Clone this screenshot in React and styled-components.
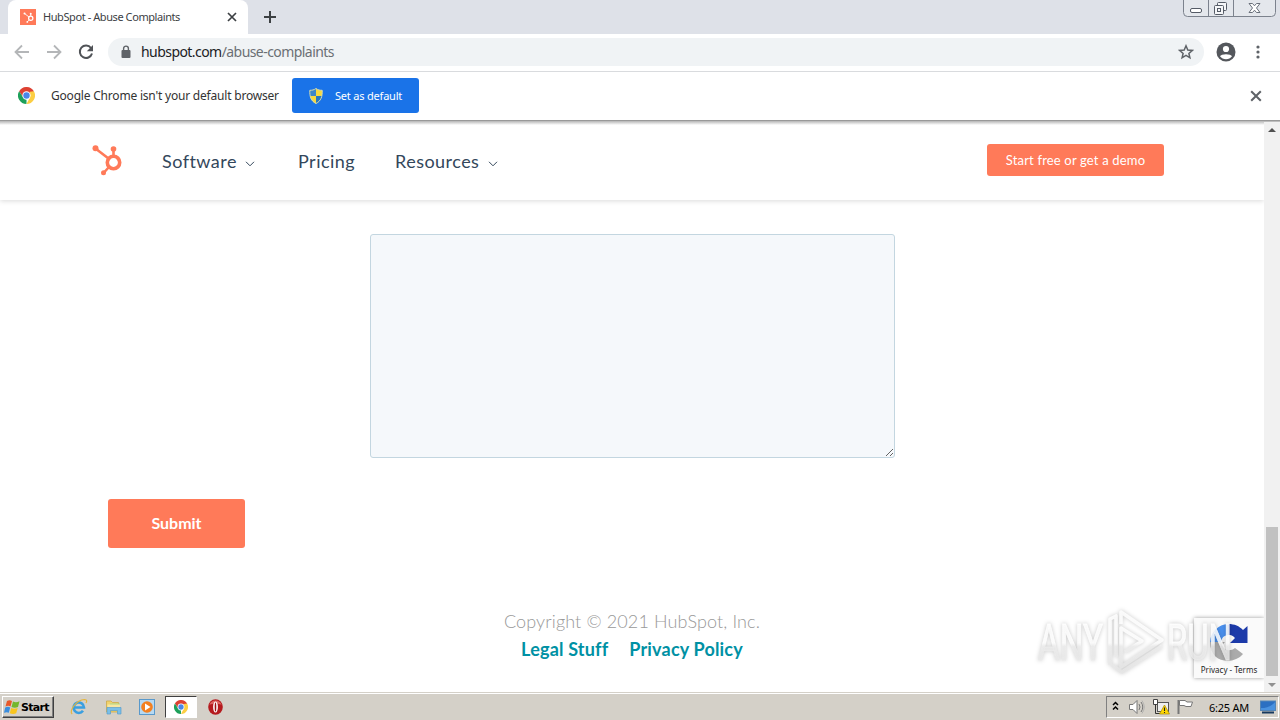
import React from 'react';
import styled, { createGlobalStyle, css } from 'styled-components';

const App = () => {
   return (
      <>
         <GlobalStyle />
         <Screen>
            <TabStrip>
               <Tab>
                  <Favicon>
                     <Sprocket size={11} color="#fff" />
                  </Favicon>
                  <TabTitle>HubSpot - Abuse Complaints</TabTitle>
                  <Cross size={10} color="#3c4043" />
               </Tab>
               <NewTab>
                  <svg width="12" height="12" viewBox="0 0 12 12">
                     <path d="M6 0V12M0 6H12" stroke="#3c4043" strokeWidth="2" />
                  </svg>
               </NewTab>
               <WindowButtons />
            </TabStrip>

            <Toolbar>
               <Arrow />
               <Arrow forward />
               <Reload />
               <AddressBar>
                  <Lock />
                  <Url>
                     hubspot.com<span>/abuse-complaints</span>
                  </Url>
                  <Star />
               </AddressBar>
               <Profile />
               <Dots />
            </Toolbar>

            <InfoBar>
               <ChromeLogo size={17} />
               <InfoText>Google Chrome isn't your default browser</InfoText>
               <DefaultButton>
                  <Shield />
                  <span>Set as default</span>
               </DefaultButton>
               <InfoClose>
                  <Cross size={12} color="#5f6368" />
               </InfoClose>
            </InfoBar>

            <Viewport>
               <Page>
                  <Nav>
                     <Sprocket size={32} color="#ff7a59" />
                     <NavItem $left={39} $width={74}>
                        Software
                     </NavItem>
                     <Chevron />
                     <NavItem $left={43} $width={57}>
                        Pricing
                     </NavItem>
                     <NavItem $left={40} $width={84}>
                        Resources
                     </NavItem>
                     <Chevron />
                     <DemoButton>Start free or get a demo</DemoButton>
                  </Nav>

                  <Form>
                     <Message />
                     <Submit>Submit</Submit>
                  </Form>

                  <Footer>
                     <Copyright>Copyright © 2021 HubSpot, Inc.</Copyright>
                     <Links>
                        <FooterLink>Legal Stuff</FooterLink>
                        <FooterLink>Privacy Policy</FooterLink>
                     </Links>
                  </Footer>

                  <Captcha>
                     <CaptchaLogo />
                     <span>Privacy - Terms</span>
                  </Captcha>
                  <Watermark />
               </Page>

               <Scrollbar>
                  <ScrollArrow>
                     <svg width="8" height="4" viewBox="0 0 8 4">
                        <path d="M0 4L4 0L8 4Z" fill="#505050" />
                     </svg>
                  </ScrollArrow>
                  <Thumb />
                  <ScrollArrow>
                     <svg width="8" height="4" viewBox="0 0 8 4">
                        <path d="M0 0L4 4L8 0Z" fill="#909090" />
                     </svg>
                  </ScrollArrow>
               </Scrollbar>
            </Viewport>

            <Taskbar>
               <StartButton>
                  <WindowsFlag />
                  <span>Start</span>
               </StartButton>
               <QuickLaunch>
                  <Task>
                     <ExplorerIcon />
                  </Task>
                  <Task>
                     <FolderIcon />
                  </Task>
                  <Task>
                     <PlayerIcon />
                  </Task>
                  <Task $active>
                     <ChromeLogo size={14} />
                  </Task>
                  <Task>
                     <OperaIcon />
                  </Task>
               </QuickLaunch>
               <Tray>
                  <TrayIcons />
                  <Clock>6:25 AM</Clock>
                  <DesktopIcon />
               </Tray>
            </Taskbar>
         </Screen>
      </>
   );
};

export default App;

/* ---------- icons ---------- */

const Sprocket = ({ size, color }) => (
   <svg width={size} height={size} viewBox="0 0 32 32" fill="none" stroke={color}>
      <circle cx="22.5" cy="18.5" r="6.2" strokeWidth="3.6" />
      <path d="M4.5 4.5L17.5 14.5M22.5 5V12M18 23L13 28.5" strokeWidth="2.6" />
      <g fill={color} stroke="none">
         <circle cx="4.5" cy="4.3" r="3" />
         <circle cx="22.5" cy="5" r="2.8" />
         <circle cx="12.5" cy="28.8" r="2.5" />
      </g>
   </svg>
);

const Cross = ({ size, color }) => (
   <svg width={size} height={size} viewBox="0 0 10 10">
      <path d="M1 1L9 9M9 1L1 9" stroke={color} strokeWidth="1.7" />
   </svg>
);

const Arrow = ({ forward }) => (
   <ArrowSvg $forward={forward} width="16" height="16" viewBox="0 0 16 16">
      <path d="M15 8H2M8 1.5L1.5 8L8 14.5" fill="none" stroke="#b4b6b8" strokeWidth="1.8" />
   </ArrowSvg>
);

const Reload = () => (
   <svg width="16" height="16" viewBox="0 0 16 16">
      <path d="M13 4A6.2 6.2 0 1 0 14 9.5" fill="none" stroke="#505357" strokeWidth="2" />
      <path d="M15 1V7.2H8.8Z" fill="#505357" />
   </svg>
);

const Lock = () => (
   <svg width="10" height="14" viewBox="0 0 10 14">
      <rect x="0.5" y="5" width="9" height="8" rx="1" fill="#5f6368" />
      <path d="M2.6 6V3.5a2.4 2.4 0 0 1 4.8 0V6" fill="none" stroke="#5f6368" strokeWidth="1.4" />
   </svg>
);

const Star = () => (
   <svg width="16" height="16" viewBox="0 0 16 16">
      <path
         d="M8 1.8L9.8 6L14.3 6.4L10.9 9.4L11.9 13.8L8 11.4L4.1 13.8L5.1 9.4L1.7 6.4L6.2 6Z"
         fill="none"
         stroke="#5f6368"
         strokeWidth="1.5"
      />
   </svg>
);

const Profile = () => (
   <svg width="20" height="20" viewBox="0 0 20 20">
      <circle cx="10" cy="10" r="9.5" fill="#54575c" />
      <circle cx="10" cy="7" r="3.1" fill="#fff" />
      <path d="M4 14.2C5 11.5 15 11.5 16 14.2C14.5 16.3 12.5 17.2 10 17.2C7.5 17.2 5.5 16.3 4 14.2Z" fill="#fff" />
   </svg>
);

const Dots = () => (
   <DotsSvg width="4" height="14" viewBox="0 0 4 14" fill="#5f6368">
      <circle cx="2" cy="2" r="1.6" />
      <circle cx="2" cy="7" r="1.6" />
      <circle cx="2" cy="12" r="1.6" />
   </DotsSvg>
);

const WindowButtons = () => (
   <WindowSvg width="93" height="17" viewBox="0 0 93 17">
      <path
         d="M0.5 0V12.5Q0.5 16.5 4.5 16.5H88.5Q92.5 16.5 92.5 12.5V0M25.5 0V16M50.5 0V16"
         fill="#e4e7ec"
         stroke="#7c828d"
      />
      <rect x="7.5" y="8.5" width="11" height="4" rx="1.5" fill="#fff" stroke="#555b66" />
      <g fill="#f5f6f8" stroke="#555b66">
         <rect x="34.5" y="2.5" width="9" height="8" rx="1" />
         <rect x="31.5" y="5.5" width="9" height="9" rx="1" />
         <rect x="34.5" y="8.5" width="3" height="3" />
      </g>
      <path
         d="M66 3.5H69.5L71.5 5.8L73.5 3.5H77L73.5 8L77 12.5H73.5L71.5 10.2L69.5 12.5H66L69.5 8Z"
         fill="#fff"
         stroke="#6a707b"
      />
   </WindowSvg>
);

const ChromeLogo = ({ size }) => (
   <svg width={size} height={size} viewBox="0 0 18 18">
      <path d="M9 9L1.2 4.5A9 9 0 0 1 16.8 4.5Z" fill="#dd4132" />
      <path d="M1.2 4.5H16.8V5H9L5.5 11Z" fill="#dd4132" />
      <path d="M1.2 4.5L5.5 11.1L9 13L9 18A9 9 0 0 1 1.2 4.5Z" fill="#1da05a" />
      <path d="M16.8 4.5A9 9 0 0 1 9 18L12.6 11V5Z" fill="#fcce43" />
      <circle cx="9" cy="9" r="4.4" fill="#fff" />
      <circle cx="9" cy="9" r="3.4" fill="#4a86e8" />
   </svg>
);

const Shield = () => (
   <svg width="14" height="16" viewBox="0 0 14 16">
      <path d="M7 0.5C5 2 3 2.3 0.8 2.3C0.5 8.5 2 13 7 15.5Z" fill="#3d87c9" />
      <path d="M7 0.5C9 2 11 2.3 13.2 2.3C13.5 8.5 12 13 7 15.5Z" fill="#f6d93f" />
      <path d="M7 8H1C1.8 11.5 3.4 14 7 15.5Z" fill="#f6d93f" />
      <path d="M7 8H13C12.2 11.5 10.6 14 7 15.5Z" fill="#2877be" />
      <path
         d="M7 0.5C5 2 3 2.3 0.8 2.3C0.5 8.5 2 13 7 15.5C12 13 13.5 8.5 13.2 2.3C11 2.3 9 2 7 0.5Z"
         fill="none"
         stroke="#d5dcb0"
      />
   </svg>
);

const Chevron = () => (
   <ChevronSvg width="10" height="6" viewBox="0 0 10 6">
      <path d="M1 0.8L5 4.8L9 0.8" fill="none" stroke="#33475b" />
   </ChevronSvg>
);

const CaptchaLogo = () => (
   <svg width="40" height="40" viewBox="0 0 40 40">
      <path d="M1 19A19 19 0 0 1 19 1V12A8 8 0 0 0 12 19Z" fill="#4a90ee" />
      <path d="M19 1C26 1 30 3 34 7L38.5 3V20H21L26 15C24 12.5 22 12 19 12Z" fill="#1c3aa9" />
      <path d="M1 19H16L13 22C16 29 22 28 26 25L34 31C25 42 1 41 1 19Z" fill="#ababab" />
   </svg>
);

const Watermark = () => (
   <WatermarkSvg width="210" height="76" viewBox="0 0 210 76">
      <defs>
         <linearGradient id="fade" gradientUnits="userSpaceOnUse" x1="0" y1="8" x2="0" y2="68">
            <stop offset="0.5" stopColor="#fff" stopOpacity="0.85" />
            <stop offset="0.56" stopColor="#ededed" stopOpacity="0.8" />
            <stop offset="1" stopColor="#e6e6e6" stopOpacity="0.8" />
         </linearGradient>
      </defs>
      <g fill="url(#fade)" stroke="url(#fade)" strokeWidth="0.8" fontFamily="'Roboto', sans-serif" fontSize="50">
         <text x="8" y="55" textLength="65" lengthAdjust="spacingAndGlyphs">
            ANY
         </text>
         <text x="137" y="55" textLength="65" lengthAdjust="spacingAndGlyphs">
            RUN
         </text>
      </g>
      <g fill="none" stroke="url(#fade)" strokeWidth="3.6" strokeLinejoin="round">
         <path d="M80 60V14L86 11V52" />
         <path d="M91 19V7L132 35L91 62V23L112 36L95 47" />
         <path d="M82 60L92 67L132 41" />
      </g>
   </WatermarkSvg>
);

const WindowsFlag = () => (
   <svg width="17" height="16" viewBox="0 0 17 16">
      <path d="M3 2C5 0.8 6.5 1 8 2L6.5 7.5C5 6.5 3.5 6.5 1.5 7.5Z" fill="#e8592a" />
      <path d="M9 2.5C11 3.5 13 3.5 15.5 2.3L14 8C12 9 9.5 9 7.5 8Z" fill="#74b72e" />
      <path d="M1.2 8.5C3 7.5 4.8 7.5 6.2 8.5L4.8 13.8C3.5 13 2 13 0 13.8Z" fill="#3b8ede" />
      <path d="M7.2 9C9 10 11.5 10 13.7 9L12.2 14.2C10.3 15.3 7.8 15.2 5.8 14.2Z" fill="#f9c51d" />
   </svg>
);

const ExplorerIcon = () => (
   <svg width="18" height="18" viewBox="0 0 18 18" fill="none">
      <path d="M4.5 9.5H14A5.2 5.2 0 1 0 13 12.8" stroke="#3a9fe0" strokeWidth="2.6" />
      <path d="M2.2 16C-1.5 13.5 6 2 14.5 1.5C17.5 1.8 16.8 3.5 16 5" stroke="#e5b53b" strokeWidth="1.2" />
   </svg>
);

const FolderIcon = () => (
   <svg width="17" height="16" viewBox="0 0 17 16">
      <path d="M1.5 2H6L7.5 3.5H13.5V13H1.5Z" fill="#f1d36e" stroke="#cda94a" strokeWidth="0.8" />
      <path d="M5 4.5H15V10H5Z" fill="#a9d98c" />
      <path d="M2.5 5.5H15V9H2.5Z" fill="#f8e6a1" />
      <path d="M2 8.5H16V15H12.5V11.5H5.5V15H2Z" fill="#79bfe8" stroke="#5a9ecb" strokeWidth="0.7" />
   </svg>
);

const PlayerIcon = () => (
   <svg width="16" height="16" viewBox="0 0 16 16">
      <rect x="0.5" y="0.5" width="15" height="15" fill="#b6d9f2" stroke="#5999cb" />
      <circle cx="8" cy="8" r="5.8" fill="#f38020" />
      <path d="M6 4.5L11.5 8L6 11.5Z" fill="#fff" />
   </svg>
);

const OperaIcon = () => (
   <svg width="15" height="16" viewBox="0 0 15 16">
      <ellipse cx="7.5" cy="8" rx="7.3" ry="7.7" fill="#b51a1e" />
      <path d="M1.4 6C3 0 12 0 13.6 6C10 4 5 4 1.4 6Z" fill="#dd6562" />
      <ellipse cx="7.5" cy="8" rx="2.4" ry="5.5" fill="#fff" />
      <ellipse cx="7.5" cy="8" rx="0.8" ry="4.6" fill="#9c1013" />
   </svg>
);

const TrayIcons = () => (
   <svg width="84" height="18" viewBox="0 0 84 18">
      <path d="M2 7L4.5 4.5L7 7M2 11.5L4.5 9L7 11.5" fill="none" stroke="#000" strokeWidth="1.5" />
      <path d="M18.5 6.5H22L26 2.5V15.5L22 11.5H18.5Z" fill="#fff" stroke="#777" />
      <path d="M28 6Q30 9 28 12M30 4Q33.5 9 30 14" fill="none" stroke="#777" />
      <path d="M31 2.5Q35.5 9 31 15.5" fill="none" stroke="#aaa" strokeWidth="0.8" />
      <rect x="46.5" y="4.5" width="11" height="9" fill="#eee" stroke="#555" />
      <path d="M42.5 1.5H46.5V6.5H42.5Z" fill="#fff" stroke="#444" />
      <path d="M44.5 6.5V15.5H51" fill="none" stroke="#333" />
      <path d="M53.5 7L58.5 16H48.5Z" fill="#ffd800" stroke="#a98900" strokeWidth="0.7" />
      <path d="M53.5 9.5V13M53.5 14V15" stroke="#222" strokeWidth="1.1" />
      <path d="M67.5 2V16" stroke="#777" strokeWidth="2" />
      <path d="M68.5 2.5H74L76 4H81.5L80 8.5H75L73 7.5H68.5Z" fill="#fff" stroke="#777" />
   </svg>
);

const DesktopIcon = () => (
   <svg width="16" height="14" viewBox="0 0 16 14">
      <rect x="0.5" y="1" width="15" height="9.5" fill="#2b6fc2" stroke="#5585b5" />
      <path d="M1 8C7 8 12 6 15 2V10H1Z" fill="#4991df" />
      <path d="M2 12.5H14" stroke="#17395e" strokeWidth="2" />
   </svg>
);

/* ---------- layout ---------- */

const GlobalStyle = createGlobalStyle`
   * {
      box-sizing: border-box;
   }
   body {
      margin: 0;
      background: #fff;
      overflow: hidden;
   }
   svg {
      display: block;
      flex-shrink: 0;
   }
`;

const ui = css`
   font-family: 'Noto Sans', 'Open Sans', sans-serif;
   white-space: nowrap;
`;

const brand = css`
   font-family: Lato, 'Open Sans', sans-serif;
   white-space: nowrap;
`;

const Screen = styled.div`
   width: 1280px;
   height: 720px;
   display: flex;
   flex-direction: column;
   overflow: hidden;
`;

const TabStrip = styled.div`
   height: 34px;
   flex-shrink: 0;
   display: flex;
   padding-left: 8px;
   background: #dee1e8;
`;

const Tab = styled.div`
   width: 240px;
   display: flex;
   align-items: center;
   padding: 0 11px 0 12px;
   background: #fff;
   border-radius: 8px 8px 0 0;
   color: #3c4043;
`;

const Favicon = styled.div`
   width: 16px;
   height: 16px;
   display: grid;
   place-items: center;
   background: #ff7a59;
`;

const TabTitle = styled.div`
   ${ui}
   flex: 1;
   padding: 0 0 2px 7px;
   font-size: 11px;
   letter-spacing: -0.42px;
`;

const NewTab = styled.div`
   padding: 11px 0 0 16px;
`;

const WindowSvg = styled.svg`
   margin: 0 4px 0 auto;
`;

const Toolbar = styled.div`
   height: 38px;
   flex-shrink: 0;
   display: flex;
   align-items: center;
   gap: 16px;
   padding: 0 20px 1px 14px;
   border-bottom: 1px solid #d9dbde;
`;

const ArrowSvg = styled.svg`
   transform: ${props => (props.$forward ? 'scaleX(-1)' : 'none')};
`;

const DotsSvg = styled.svg`
   margin-left: 4px;
`;

const AddressBar = styled.div`
   flex: 1;
   height: 28px;
   margin: 0 -4px 0 -2px;
   display: flex;
   align-items: center;
   padding: 0 10px 0 13px;
   border-radius: 14px;
   background: #f0f3f5;
`;

const Url = styled.div`
   ${ui}
   flex: 1;
   padding: 0 0 2px 10px;
   font-size: 14px;
   letter-spacing: -0.56px;
   color: #202124;

   span {
      color: #6b6f74;
   }
`;

const InfoBar = styled.div`
   height: 49px;
   flex-shrink: 0;
   display: flex;
   align-items: center;
   padding: 0 18px 1px 18px;
   border-bottom: 1px solid #999;
`;

const InfoText = styled.div`
   ${ui}
   width: 241px;
   padding-left: 16px;
   font-size: 12px;
   letter-spacing: -0.2px;
   color: #333;
`;

const DefaultButton = styled.div`
   ${ui}
   width: 127px;
   height: 35px;
   margin-left: 16px;
   display: flex;
   align-items: center;
   gap: 12px;
   padding-left: 17px;
   border-radius: 3px;
   background: #1a73e8;
   font-size: 11px;
   letter-spacing: -0.2px;
   color: #fff;

   span {
      padding-bottom: 1px;
   }
`;

const InfoClose = styled.div`
   margin-left: auto;
`;

const Viewport = styled.div`
   height: 571px;
   flex-shrink: 0;
   display: flex;
   background: linear-gradient(#b5b5b5, #fff 4px);
`;

const Page = styled.div`
   position: relative;
   width: 1264px;
   display: flex;
   flex-direction: column;
`;

const Nav = styled.div`
   height: 79px;
   display: flex;
   align-items: center;
   padding: 0 100px 1px 91px;
   box-shadow: 0 1px 5px rgba(0, 0, 0, 0.15);
   clip-path: inset(0 0 -8px 0);
`;

const NavItem = styled.div`
   ${brand}
   width: ${props => props.$width}px;
   margin-left: ${props => props.$left}px;
   padding-top: 2px;
   font-size: 18px;
   letter-spacing: 0.47px;
   color: #33475b;
`;

const ChevronSvg = styled.svg`
   margin: 7px 0 0 9px;
`;

const DemoButton = styled.div`
   ${brand}
   width: 177px;
   height: 32px;
   margin-left: auto;
   border-radius: 3px;
   background: #ff7a59;
   color: #fff;
   font-size: 13px;
   letter-spacing: 0.17px;
   line-height: 32px;
   text-align: center;
`;

const Form = styled.div`
   display: flex;
   flex-direction: column;
   padding: 34px 108px 0;
`;

const Message = styled.textarea`
   display: block;
   width: 525px;
   height: 224px;
   margin: 0 0 0 262px;
   border: 1px solid #c3d6e0;
   border-radius: 3px;
   background: #f5f8fb;
   resize: both;
`;

const Submit = styled.div`
   ${brand}
   width: 137px;
   height: 49px;
   margin-top: 41px;
   border-radius: 3px;
   background: #ff7a59;
   color: #fff;
   font-size: 16px;
   font-weight: 700;
   line-height: 48px;
   text-align: center;
`;

const Footer = styled.div`
   ${brand}
   display: flex;
   flex-direction: column;
   align-items: center;
   padding-top: 59px;
   font-size: 18px;
   line-height: 28px;
`;

const Copyright = styled.div`
   color: #999;
   font-weight: 300;
   letter-spacing: 0.13px;
`;

const Links = styled.div`
   display: flex;
   gap: 21px;
`;

const FooterLink = styled.a`
   color: #0091a4;
   font-weight: 700;
   letter-spacing: 0.18px;
`;

const Captcha = styled.div`
   ${ui}
   position: absolute;
   right: 0;
   top: 497px;
   width: 70px;
   height: 60px;
   display: flex;
   flex-direction: column;
   align-items: center;
   padding-top: 5px;
   background: #fafafa;
   box-shadow: 0 0 4px #999;
   clip-path: inset(-5px 0 -5px -5px);
   font-size: 8px;
   line-height: 14px;
   color: #222;
`;

const WatermarkSvg = styled.svg`
   position: absolute;
   left: 1030px;
   top: 484px;
   filter: drop-shadow(0 0 2px rgba(0, 0, 0, 0.25));
`;

const Scrollbar = styled.div`
   width: 16px;
   display: flex;
   flex-direction: column;
   margin-top: 1px;
   background: #f1f1f1;
`;

const ScrollArrow = styled.div`
   height: 15px;
   display: grid;
   place-items: center;
`;

const Thumb = styled.div`
   width: 12px;
   height: 149px;
   margin: auto 2px 1px;
   background: #c1c1c1;
`;

const Taskbar = styled.div`
   height: 28px;
   flex-shrink: 0;
   display: flex;
   padding: 3px 1px 1px 2px;
   border-top: 1px solid #d4d0c8;
   box-shadow: inset 0 1px #fff;
   background: #d4d0c8;
`;

const StartButton = styled.div`
   width: 52px;
   height: 22px;
   display: flex;
   align-items: center;
   padding-left: 1px;
   border: 1px solid;
   border-color: #fff #404040 #404040 #fff;
   box-shadow: inset -1px -1px #808080;
   font-family: 'DejaVu Sans', sans-serif;
   font-size: 11px;
   font-weight: 700;
   letter-spacing: -0.7px;
`;

const QuickLaunch = styled.div`
   display: flex;
   margin-left: 8px;
`;

const Task = styled.div`
   width: ${props => (props.$active ? 32 : 34)}px;
   margin: ${props => (props.$active ? '0 1px' : '0')};
   height: 22px;
   display: grid;
   place-items: center;
   ${props =>
      props.$active &&
      css`
         border: 1px solid;
         border-color: #404040 #fff #fff #404040;
         background: #fff;
      `}
`;

const Tray = styled.div`
   width: 173px;
   height: 22px;
   margin-left: auto;
   display: flex;
   align-items: center;
   padding: 0 2px 0 4px;
   border: 1px solid;
   border-color: #808080 #fff #fff #808080;
`;

const Clock = styled.div`
   ${ui}
   width: 43px;
   margin: 0 auto 0 14px;
   font-size: 11px;
   letter-spacing: -0.25px;
   color: #000;
`;
